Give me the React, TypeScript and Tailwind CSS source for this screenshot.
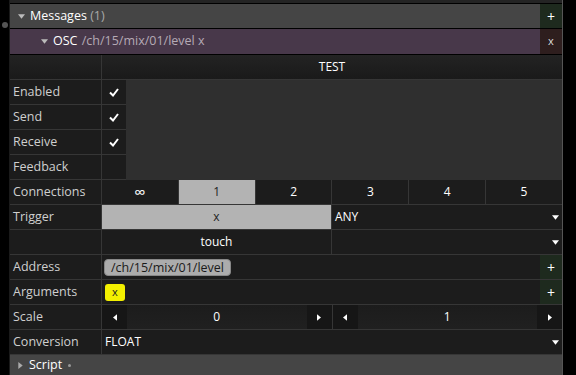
import React from "react";

const font = { fontFamily: '"Open Sans", "Liberation Sans", sans-serif' };

function Tri({ dir = "down", className = "" }: { dir?: "down" | "right" | "left"; className?: string }) {
  const pts =
    dir === "down" ? "0,0 8,0 4,5" : dir === "right" ? "0,0 5,4 0,8" : "5,0 0,4 5,8";
  const w = dir === "down" ? 8 : 5;
  const h = dir === "down" ? 5 : 8;
  return (
    <svg width={w} height={h} viewBox={`0 0 ${w} ${h}`} className={className}>
      <polygon points={pts} fill="currentColor" />
    </svg>
  );
}

function Check() {
  return (
    <svg width="10" height="9" viewBox="0 0 10 9">
      <path d="M1 4.5 L4 7.5 L9 1" stroke="white" strokeWidth="2" fill="none" />
    </svg>
  );
}

function Plus() {
  return (
    <div className="w-[22px] h-full bg-[#1e2a1e] flex items-center justify-center text-white text-[14px]">
      +
    </div>
  );
}

function Label({ children }: { children?: React.ReactNode }) {
  return (
    <div className="w-[92px] shrink-0 h-full border-r border-[#363636] flex items-center px-[3px] text-[#cfcfcf] text-[12.5px]">
      {children}
    </div>
  );
}

function Row({ label, children, cls = "" }: { label?: string; children?: React.ReactNode; cls?: string }) {
  return (
    <div className={`flex h-[25px] border-b border-[#363636] bg-[#1c1c1c] ${cls}`}>
      <Label>{label}</Label>
      <div className="flex-1 flex h-full min-w-0">{children}</div>
    </div>
  );
}

function Arrow() {
  return (
    <div className="w-[14px] flex items-center justify-end pr-[3px] text-white">
      <Tri dir="down" className="w-[7px] h-[5px]" />
    </div>
  );
}

function Stepper({ value, border }: { value: string; border?: boolean }) {
  return (
    <div className={`flex-1 flex h-full ${border ? "border-r border-[#363636]" : ""}`}>
      <div className="w-[25px] bg-[#161616] flex items-center justify-center text-white">
        <Tri dir="left" className="w-[4px] h-[7px]" />
      </div>
      <div className="flex-1 flex items-center justify-center text-white bg-gradient-to-b from-[#1c1c1c] to-[#202020]">
        {value}
      </div>
      <div className="w-[25px] bg-[#161616] flex items-center justify-center text-white">
        <Tri dir="right" className="w-[4px] h-[7px]" />
      </div>
    </div>
  );
}

export default function App() {
  const checks: [string, boolean][] = [
    ["Enabled", true],
    ["Send", true],
    ["Receive", true],
    ["Feedback", false],
  ];
  const conns = ["∞", "1", "2", "3", "4", "5"];
  return (
    <div className="w-[576px] h-[375px] bg-black flex overflow-hidden text-[12px]" style={font}>
      <div className="w-[10px] shrink-0 border-r border-[#1a1a1a] relative">
        <div className="absolute left-[2px] top-[22px] w-[6px] h-[6px] rounded-full bg-[#555]" />
      </div>
      <div className="w-[552px] shrink-0 flex flex-col">
        <div className="h-[4px] bg-[#242424] border-b border-black" />
        {/* Messages header */}
        <div className="h-[25px] flex bg-[#454545] border-b border-black">
          <div className="flex-1 flex items-center pl-[8px] gap-[5px]">
            <Tri className="text-[#bbb] w-[7px] h-[5px]" />
            <span className="text-white text-[12.5px]">
              Messages <span className="text-[#aaa]">(1)</span>
            </span>
          </div>
          <Plus />
        </div>
        {/* OSC header */}
        <div className="h-[26px] flex bg-[#48384a] border-b border-black">
          <div className="flex-1 flex items-center pl-[31px] gap-[5px]">
            <Tri className="text-[#bbb] w-[7px] h-[5px]" />
            <span className="text-white text-[12.5px]">
              OSC <span className="text-[#b5aab5] ml-[1px]">/ch/15/mix/01/level x</span>
            </span>
          </div>
          <div className="w-[22px] bg-[#2e1e1e] flex items-center justify-center text-[#ddd] text-[11px]">x</div>
        </div>
        {/* TEST row */}
        <div className="flex h-[25px] border-b border-[#363636] bg-gradient-to-b from-[#232323] to-[#1a1a1a]">
          <Label />
          <div className="flex-1 flex items-center justify-center text-white">TEST</div>
        </div>
        {/* checkboxes */}
        <div className="flex">
          <div className="flex flex-col">
            {checks.map(([l, c]) => (
              <div key={l} className="flex h-[25px] border-b border-[#363636] bg-[#1c1c1c]">
                <Label>{l}</Label>
                <div className="w-[24px] flex items-center justify-center">{c && <Check />}</div>
              </div>
            ))}
          </div>
          <div className="flex-1 bg-[#2f2f2f]" />
        </div>
        <Row label="Connections">
          {conns.map((c, i) => (
            <div
              key={c}
              className={`flex-1 flex items-center justify-center ${i < 5 ? "border-r border-[#363636]" : ""} ${
                i === 1 ? "bg-[#b3b3b3] text-[#222]" : "text-white"
              } ${i === 0 ? "text-[16px]" : ""}`}
            >
              {c}
            </div>
          ))}
        </Row>
        <Row label="Trigger">
          <div className="w-[230px] bg-[#b3b3b3] text-[#222] flex items-center justify-center border-r border-[#363636]">
            x
          </div>
          <div className="flex-1 flex items-center pl-[3px] text-white">ANY</div>
          <Arrow />
        </Row>
        <Row>
          <div className="w-[230px] text-white flex items-center justify-center border-r border-[#363636]">touch</div>
          <div className="flex-1" />
          <Arrow />
        </Row>
        <Row label="Address">
          <div className="flex-1 flex items-center pl-[2px]">
            <span className="bg-[#acacac] text-[#1a1a1a] rounded-[4px] border border-[#888] px-[6px] h-[17px] leading-[15px] text-[12.5px]">
              /ch/15/mix/01/level
            </span>
          </div>
          <Plus />
        </Row>
        <Row label="Arguments">
          <div className="flex-1 flex items-center pl-[3px]">
            <span className="bg-[#f3f000] text-[#222] rounded-[3px] w-[20px] h-[17px] flex items-center justify-center text-[11px]">
              x
            </span>
          </div>
          <Plus />
        </Row>
        <Row label="Scale">
          <Stepper value="0" border />
          <Stepper value="1" />
        </Row>
        <Row label="Conversion">
          <div className="flex-1 flex items-center pl-[3px] text-white">FLOAT</div>
          <Arrow />
        </Row>
        {/* Script header */}
        <div className="flex-1 bg-[#454545] flex items-center pl-[8px] gap-[6px]">
          <Tri dir="right" className="text-[#aaa] w-[5px] h-[7px]" />
          <span className="text-white text-[12.5px]">Script</span>
          <span className="w-[3px] h-[3px] rounded-full bg-[#999]" />
        </div>
      </div>
      <div className="w-[1px] bg-[#555]" />
      <div className="flex-1 bg-black" />
    </div>
  );
}
